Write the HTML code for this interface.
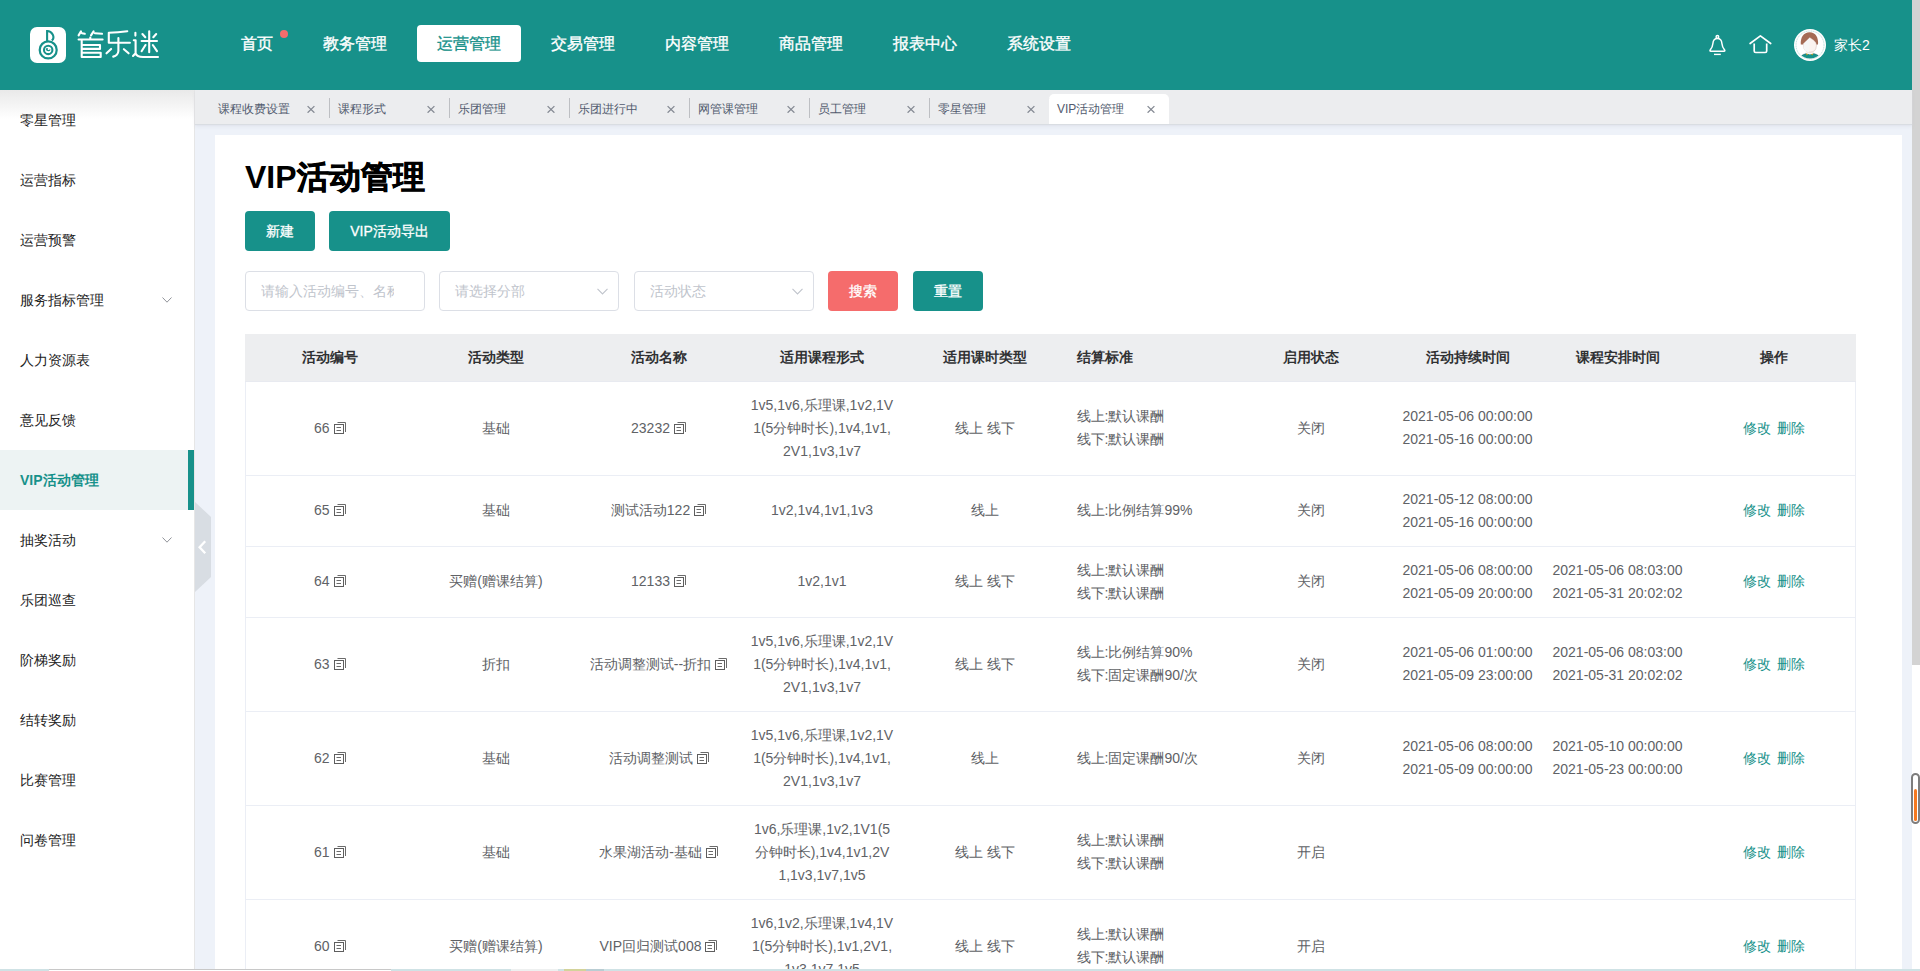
<!DOCTYPE html>
<html><head><meta charset="utf-8">
<style>
*{box-sizing:border-box;margin:0;padding:0}
html,body{width:1920px;height:971px;overflow:hidden;background:#fff}
body{font-family:"Liberation Sans",sans-serif;font-size:14px;color:#333;position:relative}
.abs{position:absolute}
#hdr{left:0;top:0;width:1912px;height:90px;background:#17918a}
#logo{left:30px;top:27px;width:36px;height:36px;background:#fff;border-radius:7px}
#brand{left:78px;top:27px;font-size:27px;color:#fff;line-height:34px;letter-spacing:0px}
.nav{top:25px;height:37px;line-height:37px;font-size:16px;color:#fff;padding:0 20px;border-radius:4px;-webkit-text-stroke:0.35px currentColor}
.nav.on{background:#fff;color:#17918a}
#dot{left:280px;top:30px;width:8px;height:8px;border-radius:50%;background:#f56c6c}
#sb{left:0;top:90px;width:195px;height:881px;background:#fff;border-right:1px solid #e6e6e6}
#sbshadow{left:0;top:90px;width:194px;height:29px;background:linear-gradient(#e9e9e9,#f3f3f3 45%,rgba(255,255,255,0))}
.mi{left:0;width:194px;height:60px;line-height:60px;padding-left:20px;font-size:14px;color:#222}
.mi.on{background:#edf3f3;color:#17918a;font-weight:bold}
.mi.on:after{content:"";position:absolute;right:0;top:0;width:6px;height:60px;background:#17918a}
.chev{position:absolute;left:162px;top:27px;width:10px;height:6px}
#tabs{left:195px;top:90px;width:1717px;height:34px;background:#ecedef;box-shadow:0 1px 1px #d9dde2,0 3px 3px rgba(200,205,215,.25)}
.tab{top:4px;width:120px;height:30px;line-height:30px;font-size:12px;color:#515a6e;padding-left:9px}
.tab .x{position:absolute;left:98px;top:11px;width:8px;height:8px}
.tab .sep{position:absolute;left:120px;top:4px;width:1px;height:20px;background:#bdbfc3}
.tab.on{background:#fff;border-radius:5px 5px 0 0;padding-left:8px}
#page{left:195px;top:125px;width:1717px;height:846px;background:#eef2f9}
#card{left:215px;top:135px;width:1687px;height:836px;background:#fff}
#title{left:245px;top:157px;font-size:32px;font-weight:bold;color:#000;line-height:40px}
.btn{height:40px;line-height:40px;text-align:center;color:#fff;background:#17918a;border-radius:4px;font-size:14px;-webkit-text-stroke:0.3px #fff}
.inp{top:271px;width:180px;height:40px;border:1px solid #dcdfe6;border-radius:4px;line-height:38px;padding-left:15px;color:#c0c4cc;font-size:14px;overflow:hidden;white-space:nowrap;background:#fff}
.inp svg{position:absolute;top:16px;width:11px;height:7px}
#tbl{left:245px;top:334px;width:1610px;border-collapse:collapse;table-layout:fixed;font-size:14px;color:#606266}
#tbl th{background:#edeef0;color:#303133;font-weight:bold;height:47px;padding:2px 0 0;text-align:center;border-bottom:1px solid #e8eaf0}
#tbl td{padding:12px 10px 12px;text-align:center;line-height:23px;border-bottom:1px solid #ebeef5;word-break:break-all}
#tbl tr td:first-child{border-left:1px solid #ebeef5}
#tbl th:first-child{border-left:1px solid #edeef0}
#tbl th:last-child{border-right:1px solid #edeef0}
#tbl tr td:last-child{border-right:1px solid #ebeef5}
#tbl td.l{text-align:left}
.cp{display:inline-block;width:13px;height:13px;vertical-align:-1px;margin-left:4px}
.op{color:#17918a}
</style></head><body>
<div id="hdr" class="abs"></div>
<div id="logo" class="abs"><svg width="36" height="36" viewBox="0 0 36 36" fill="none" stroke="#17918a"><path d="M17.1 3 V14" stroke-width="2.1"/><path d="M17.1 4 C22 4, 25.5 10, 21.9 13.6" stroke-width="2.1"/><circle cx="18.2" cy="22.9" r="8.5" stroke-width="2.2"/><circle cx="18.2" cy="22.9" r="4.2" stroke-width="2.1"/><path d="M16.2 22.3 A2.2 2.2 0 0 0 20.2 22.4" stroke-width="1.1"/><circle cx="17" cy="22" r="1" fill="#17918a" stroke="none"/></svg></div>
<svg id="brand" class="abs" style="left:70px;top:20px" width="100" height="50" viewBox="0 0 100 50" fill="none" stroke="#fff" stroke-width="2.1" stroke-linecap="round" stroke-linejoin="round">
<path d="M8.6 15.4 L11 11.4 M12 13.2 L14.8 13.8 M21 15.4 L23.6 11.4 M24.8 13.2 L32 13.8"/>
<path d="M8.6 19.5 H32.6 M20.3 17.6 V19.5"/>
<path d="M11.7 20.5 V37 H30.7 V32.8 H11.7 M11.7 25 H30 V28.9 H11.7"/>
<path d="M38.8 12.8 Q48 12.6 57.3 11.2 M38.8 12.8 V22.8 H59.9 M48.4 18 V31 Q48 35.6 43.2 36.6 M41.1 28.9 L36.5 33.3 M53.9 29.2 L58.6 33.3"/>
<path d="M65.4 12.8 V15.6 M63.8 20.3 H65.6 V33.3 L63 36 M65.6 33.3 Q67 37 73 37 H88 M79.2 11.2 V32.3 M71.6 21 H87 M72.4 14 L75.3 17.2 M86.2 14 L83.3 17.2 M75.5 25 L71.6 31.2 M82.8 25 L87 31.2"/>
</svg>
<div class="abs nav" style="left:221px">首页</div>
<div id="dot" class="abs"></div>
<div class="abs nav" style="left:303px">教务管理</div>
<div class="abs nav on" style="left:417px">运营管理</div>
<div class="abs nav" style="left:531px">交易管理</div>
<div class="abs nav" style="left:645px">内容管理</div>
<div class="abs nav" style="left:759px">商品管理</div>
<div class="abs nav" style="left:873px">报表中心</div>
<div class="abs nav" style="left:987px">系统设置</div>

<!-- right icons -->
<svg class="abs" style="left:1706px;top:33px" width="24" height="24" viewBox="0 0 24 24" fill="none" stroke="#fff" stroke-width="1.5" stroke-linejoin="round"><circle cx="11.4" cy="3.9" r="1.3"/><path d="M11.4 5.6 C8.3 5.6 7.1 7.8 6.9 10.5 C6.7 13 5.9 15 4.2 17 Q3.5 18.2 4.8 18.2 H18 Q19.3 18.2 18.6 17 C16.9 15 16.1 13 15.9 10.5 C15.7 7.8 14.5 5.6 11.4 5.6 Z"/><path d="M8 21.4 H14.8" stroke-width="1.4"/></svg>
<svg class="abs" style="left:1748px;top:33px" width="25" height="23" viewBox="0 0 25 23" fill="none" stroke="#fff" stroke-width="1.7" stroke-linejoin="round" stroke-linecap="round"><path d="M2.1 10.5 L12.4 2.9 L22.7 10.5"/><path d="M6.2 10.6 V18 Q6.2 19.5 7.7 19.5 H17.2 Q18.7 19.5 18.7 18 V10.6" stroke-linecap="butt"/></svg>
<div class="abs" style="left:1794px;top:29px;width:32px;height:32px;border-radius:50%;background:#fff;overflow:hidden">
<svg width="32" height="32" viewBox="0 0 32 32"><defs><clipPath id="avc"><circle cx="16" cy="16" r="13.6"/></clipPath></defs>
<g clip-path="url(#avc)">
<path d="M5 31 Q6.5 25.6 12 24.6 H20 Q25.5 25.6 27 31 Z" fill="#17918a" stroke="#33506a" stroke-width="0.3"/>
<path d="M11.8 23.4 L14.2 25.8 L12.6 26.2 Z M19.4 23.4 L17 25.8 L18.6 26.2 Z" fill="#d4a017"/>
<path d="M12.4 21.5 V24.6 Q16 26.2 19.2 24.6 V21.5 Z" fill="#fbf1ee"/>
</g>
<path d="M6.8 15.6 C6.2 8.4 9.6 3.2 15.6 3.2 C21.6 3.2 24.6 8.4 24 15.6 Z" fill="#a56b55"/>
<path d="M9.4 14.8 L15.9 8.6 Q19.6 10.8 21.9 13.4 Q22.6 15 22.4 17 Q22 23.2 16 23.2 Q10 23.2 9.6 17 Z" fill="#fbf3f0" stroke="#b58d80" stroke-width="0.3"/>
<path d="M9.4 14.8 L15.9 8.6 L15.2 23.2 Q10 23.2 9.6 17 Z" fill="#f6f6f6"/>
<circle cx="16" cy="16" r="14" fill="none" stroke="#7fbfba" stroke-width="0.5" stroke-dasharray="1.2 0.6"/>
</svg></div>
<div class="abs" style="left:1834px;top:36px;font-size:14px;color:#fff;line-height:18px">家长2</div>

<!-- scrollbar -->
<div class="abs" style="left:1912px;top:0;width:8px;height:971px;background:#fff"></div>
<div class="abs" style="left:1912px;top:0;width:8px;height:665px;background:#d3d3d3"></div>
<div class="abs" style="z-index:6;left:1911px;top:773px;width:9px;height:51px;border:2px solid #7d7d7d;border-radius:5px;background:#fff"></div>
<div class="abs" style="z-index:7;left:1914px;top:789px;width:3px;height:32px;border-radius:1.5px;background:#f47920"></div>
<!-- bottom strip -->
<div class="abs" style="left:0;top:969px;width:1920px;height:2px;background:#cfe2e5;z-index:5"></div>
<div class="abs" style="left:49px;top:969px;width:342px;height:2px;background:#fff;border-top:1px solid #c8c8c8;z-index:5"></div>
<div class="abs" style="left:511px;top:969px;width:47px;height:2px;background:#eef0f0;z-index:5"></div>
<div class="abs" style="left:564px;top:969px;width:22px;height:2px;background:#d3d39a;z-index:5"></div>
<div class="abs" style="left:586px;top:969px;width:18px;height:2px;background:#b9cdd3;z-index:5"></div>
<div id="sb" class="abs"></div>
<div id="sbshadow" class="abs"></div>
<div class="abs mi" style="top:90px">零星管理</div>
<div class="abs mi" style="top:150px">运营指标</div>
<div class="abs mi" style="top:210px">运营预警</div>
<div class="abs mi" style="top:270px">服务指标管理<svg class="chev" viewBox="0 0 10 6"><path d="M0.5 0.5 L5 5.2 L9.5 0.5" fill="none" stroke="#909399" stroke-width="1"/></svg></div>
<div class="abs mi" style="top:330px">人力资源表</div>
<div class="abs mi" style="top:390px">意见反馈</div>
<div class="abs mi on" style="top:450px">VIP活动管理</div>
<div class="abs mi" style="top:510px">抽奖活动<svg class="chev" viewBox="0 0 10 6"><path d="M0.5 0.5 L5 5.2 L9.5 0.5" fill="none" stroke="#909399" stroke-width="1"/></svg></div>
<div class="abs mi" style="top:570px">乐团巡查</div>
<div class="abs mi" style="top:630px">阶梯奖励</div>
<div class="abs mi" style="top:690px">结转奖励</div>
<div class="abs mi" style="top:750px">比赛管理</div>
<div class="abs mi" style="top:810px">问卷管理</div>

<div id="page" class="abs"></div>
<svg class="abs" style="left:195px;top:502px" width="17" height="90" viewBox="0 0 17 90"><path d="M0 0 L16 15 V75 L0 90z" fill="#d8dde3"/><path d="M10.2 39.2 L4.6 45.2 L10.2 51.2" fill="none" stroke="#fff" stroke-width="2.3"/></svg>

<div id="tabs" class="abs">
<div class="abs tab" style="left:14px">课程收费设置<svg class="x" viewBox="0 0 8 8"><path d="M0.6 1.1 L7.4 7.7 M7.4 1.1 L0.6 7.7" stroke="#858a94" stroke-width="1.3"/></svg><div class="sep"></div></div>
<div class="abs tab" style="left:134px">课程形式<svg class="x" viewBox="0 0 8 8"><path d="M0.6 1.1 L7.4 7.7 M7.4 1.1 L0.6 7.7" stroke="#858a94" stroke-width="1.3"/></svg><div class="sep"></div></div>
<div class="abs tab" style="left:254px">乐团管理<svg class="x" viewBox="0 0 8 8"><path d="M0.6 1.1 L7.4 7.7 M7.4 1.1 L0.6 7.7" stroke="#858a94" stroke-width="1.3"/></svg><div class="sep"></div></div>
<div class="abs tab" style="left:374px">乐团进行中<svg class="x" viewBox="0 0 8 8"><path d="M0.6 1.1 L7.4 7.7 M7.4 1.1 L0.6 7.7" stroke="#858a94" stroke-width="1.3"/></svg><div class="sep"></div></div>
<div class="abs tab" style="left:494px">网管课管理<svg class="x" viewBox="0 0 8 8"><path d="M0.6 1.1 L7.4 7.7 M7.4 1.1 L0.6 7.7" stroke="#858a94" stroke-width="1.3"/></svg><div class="sep"></div></div>
<div class="abs tab" style="left:614px">员工管理<svg class="x" viewBox="0 0 8 8"><path d="M0.6 1.1 L7.4 7.7 M7.4 1.1 L0.6 7.7" stroke="#858a94" stroke-width="1.3"/></svg><div class="sep"></div></div>
<div class="abs tab" style="left:734px">零星管理<svg class="x" viewBox="0 0 8 8"><path d="M0.6 1.1 L7.4 7.7 M7.4 1.1 L0.6 7.7" stroke="#858a94" stroke-width="1.3"/></svg><div class="sep"></div></div>
<div class="abs tab on" style="left:854px">VIP活动管理<svg class="x" viewBox="0 0 8 8"><path d="M0.6 1.1 L7.4 7.7 M7.4 1.1 L0.6 7.7" stroke="#858a94" stroke-width="1.3"/></svg></div>
</div>
<div id="card" class="abs"></div>
<div id="title" class="abs">VIP<span style="-webkit-text-stroke:0.7px #000">活动管理</span></div>
<div class="abs btn" style="left:245px;top:211px;width:70px">新建</div>
<div class="abs btn" style="left:329px;top:211px;width:121px">VIP活动导出</div>
<div class="abs inp" style="left:245px"><span style="display:inline-block;width:133px;overflow:hidden;vertical-align:top">请输入活动编号、名称</span></div>
<div class="abs inp" style="left:439px">请选择分部<svg style="left:157px" viewBox="0 0 11 7"><path d="M0.5 0.8 L5.5 6 L10.5 0.8" fill="none" stroke="#c0c4cc" stroke-width="1.1"/></svg></div>
<div class="abs inp" style="left:634px">活动状态<svg style="left:157px" viewBox="0 0 11 7"><path d="M0.5 0.8 L5.5 6 L10.5 0.8" fill="none" stroke="#c0c4cc" stroke-width="1.1"/></svg></div>
<div class="abs btn" style="left:828px;top:271px;width:70px;background:#f56c6c">搜索</div>
<div class="abs btn" style="left:913px;top:271px;width:70px">重置</div>

<table id="tbl" class="abs">
<colgroup><col style="width:169px"><col style="width:163px"><col style="width:163px"><col style="width:163px"><col style="width:163px"><col style="width:163px"><col style="width:163px"><col style="width:150px"><col style="width:150px"><col style="width:163px"></colgroup>
<thead><tr><th>活动编号</th><th>活动类型</th><th>活动名称</th><th>适用课程形式</th><th>适用课时类型</th><th style="text-align:left;padding-left:10px">结算标准</th><th>启用状态</th><th>活动持续时间</th><th>课程安排时间</th><th>操作</th></tr></thead>
<tbody id="tb">
<tr><td>66<svg class="cp" viewBox="0 0 13 13"><path d="M3.5 1.5 H11.5 V11" fill="none" stroke="#6b6b6b" stroke-width="1"/><rect x="0.5" y="3.5" width="9" height="9" fill="#fff" stroke="#5e5e5e" stroke-width="1"/><path d="M2.5 6.5 H7 M2.5 9.5 H7" stroke="#6b6b6b" stroke-width="1"/></svg></td><td>基础</td><td>23232<svg class="cp" viewBox="0 0 13 13"><path d="M3.5 1.5 H11.5 V11" fill="none" stroke="#6b6b6b" stroke-width="1"/><rect x="0.5" y="3.5" width="9" height="9" fill="#fff" stroke="#5e5e5e" stroke-width="1"/><path d="M2.5 6.5 H7 M2.5 9.5 H7" stroke="#6b6b6b" stroke-width="1"/></svg></td><td>1v5,1v6,乐理课,1v2,1V1(5分钟时长),1v4,1v1,2V1,1v3,1v7</td><td>线上 线下</td><td class="l">线上:默认课酬<br>线下:默认课酬</td><td>关闭</td><td>2021-05-06 00:00:00<br>2021-05-16 00:00:00</td><td></td><td class="op">修改<span style="padding-left:6px">删除</span></td></tr>
<tr><td>65<svg class="cp" viewBox="0 0 13 13"><path d="M3.5 1.5 H11.5 V11" fill="none" stroke="#6b6b6b" stroke-width="1"/><rect x="0.5" y="3.5" width="9" height="9" fill="#fff" stroke="#5e5e5e" stroke-width="1"/><path d="M2.5 6.5 H7 M2.5 9.5 H7" stroke="#6b6b6b" stroke-width="1"/></svg></td><td>基础</td><td>测试活动122<svg class="cp" viewBox="0 0 13 13"><path d="M3.5 1.5 H11.5 V11" fill="none" stroke="#6b6b6b" stroke-width="1"/><rect x="0.5" y="3.5" width="9" height="9" fill="#fff" stroke="#5e5e5e" stroke-width="1"/><path d="M2.5 6.5 H7 M2.5 9.5 H7" stroke="#6b6b6b" stroke-width="1"/></svg></td><td>1v2,1v4,1v1,1v3</td><td>线上</td><td class="l">线上:比例结算99%</td><td>关闭</td><td>2021-05-12 08:00:00<br>2021-05-16 00:00:00</td><td></td><td class="op">修改<span style="padding-left:6px">删除</span></td></tr>
<tr><td>64<svg class="cp" viewBox="0 0 13 13"><path d="M3.5 1.5 H11.5 V11" fill="none" stroke="#6b6b6b" stroke-width="1"/><rect x="0.5" y="3.5" width="9" height="9" fill="#fff" stroke="#5e5e5e" stroke-width="1"/><path d="M2.5 6.5 H7 M2.5 9.5 H7" stroke="#6b6b6b" stroke-width="1"/></svg></td><td>买赠(赠课结算)</td><td>12133<svg class="cp" viewBox="0 0 13 13"><path d="M3.5 1.5 H11.5 V11" fill="none" stroke="#6b6b6b" stroke-width="1"/><rect x="0.5" y="3.5" width="9" height="9" fill="#fff" stroke="#5e5e5e" stroke-width="1"/><path d="M2.5 6.5 H7 M2.5 9.5 H7" stroke="#6b6b6b" stroke-width="1"/></svg></td><td>1v2,1v1</td><td>线上 线下</td><td class="l">线上:默认课酬<br>线下:默认课酬</td><td>关闭</td><td>2021-05-06 08:00:00<br>2021-05-09 20:00:00</td><td>2021-05-06 08:03:00<br>2021-05-31 20:02:02</td><td class="op">修改<span style="padding-left:6px">删除</span></td></tr>
<tr><td>63<svg class="cp" viewBox="0 0 13 13"><path d="M3.5 1.5 H11.5 V11" fill="none" stroke="#6b6b6b" stroke-width="1"/><rect x="0.5" y="3.5" width="9" height="9" fill="#fff" stroke="#5e5e5e" stroke-width="1"/><path d="M2.5 6.5 H7 M2.5 9.5 H7" stroke="#6b6b6b" stroke-width="1"/></svg></td><td>折扣</td><td>活动调整测试--折扣<svg class="cp" viewBox="0 0 13 13"><path d="M3.5 1.5 H11.5 V11" fill="none" stroke="#6b6b6b" stroke-width="1"/><rect x="0.5" y="3.5" width="9" height="9" fill="#fff" stroke="#5e5e5e" stroke-width="1"/><path d="M2.5 6.5 H7 M2.5 9.5 H7" stroke="#6b6b6b" stroke-width="1"/></svg></td><td>1v5,1v6,乐理课,1v2,1V1(5分钟时长),1v4,1v1,2V1,1v3,1v7</td><td>线上 线下</td><td class="l">线上:比例结算90%<br>线下:固定课酬90/次</td><td>关闭</td><td>2021-05-06 01:00:00<br>2021-05-09 23:00:00</td><td>2021-05-06 08:03:00<br>2021-05-31 20:02:02</td><td class="op">修改<span style="padding-left:6px">删除</span></td></tr>
<tr><td>62<svg class="cp" viewBox="0 0 13 13"><path d="M3.5 1.5 H11.5 V11" fill="none" stroke="#6b6b6b" stroke-width="1"/><rect x="0.5" y="3.5" width="9" height="9" fill="#fff" stroke="#5e5e5e" stroke-width="1"/><path d="M2.5 6.5 H7 M2.5 9.5 H7" stroke="#6b6b6b" stroke-width="1"/></svg></td><td>基础</td><td>活动调整测试<svg class="cp" viewBox="0 0 13 13"><path d="M3.5 1.5 H11.5 V11" fill="none" stroke="#6b6b6b" stroke-width="1"/><rect x="0.5" y="3.5" width="9" height="9" fill="#fff" stroke="#5e5e5e" stroke-width="1"/><path d="M2.5 6.5 H7 M2.5 9.5 H7" stroke="#6b6b6b" stroke-width="1"/></svg></td><td>1v5,1v6,乐理课,1v2,1V1(5分钟时长),1v4,1v1,2V1,1v3,1v7</td><td>线上</td><td class="l">线上:固定课酬90/次</td><td>关闭</td><td>2021-05-06 08:00:00<br>2021-05-09 00:00:00</td><td>2021-05-10 00:00:00<br>2021-05-23 00:00:00</td><td class="op">修改<span style="padding-left:6px">删除</span></td></tr>
<tr><td>61<svg class="cp" viewBox="0 0 13 13"><path d="M3.5 1.5 H11.5 V11" fill="none" stroke="#6b6b6b" stroke-width="1"/><rect x="0.5" y="3.5" width="9" height="9" fill="#fff" stroke="#5e5e5e" stroke-width="1"/><path d="M2.5 6.5 H7 M2.5 9.5 H7" stroke="#6b6b6b" stroke-width="1"/></svg></td><td>基础</td><td>水果湖活动-基础<svg class="cp" viewBox="0 0 13 13"><path d="M3.5 1.5 H11.5 V11" fill="none" stroke="#6b6b6b" stroke-width="1"/><rect x="0.5" y="3.5" width="9" height="9" fill="#fff" stroke="#5e5e5e" stroke-width="1"/><path d="M2.5 6.5 H7 M2.5 9.5 H7" stroke="#6b6b6b" stroke-width="1"/></svg></td><td>1v6,乐理课,1v2,1V1(5分钟时长),1v4,1v1,2V1,1v3,1v7,1v5</td><td>线上 线下</td><td class="l">线上:默认课酬<br>线下:默认课酬</td><td>开启</td><td></td><td></td><td class="op">修改<span style="padding-left:6px">删除</span></td></tr>
<tr><td>60<svg class="cp" viewBox="0 0 13 13"><path d="M3.5 1.5 H11.5 V11" fill="none" stroke="#6b6b6b" stroke-width="1"/><rect x="0.5" y="3.5" width="9" height="9" fill="#fff" stroke="#5e5e5e" stroke-width="1"/><path d="M2.5 6.5 H7 M2.5 9.5 H7" stroke="#6b6b6b" stroke-width="1"/></svg></td><td>买赠(赠课结算)</td><td>VIP回归测试008<svg class="cp" viewBox="0 0 13 13"><path d="M3.5 1.5 H11.5 V11" fill="none" stroke="#6b6b6b" stroke-width="1"/><rect x="0.5" y="3.5" width="9" height="9" fill="#fff" stroke="#5e5e5e" stroke-width="1"/><path d="M2.5 6.5 H7 M2.5 9.5 H7" stroke="#6b6b6b" stroke-width="1"/></svg></td><td>1v6,1v2,乐理课,1v4,1V1(5分钟时长),1v1,2V1,1v3,1v7,1v5</td><td>线上 线下</td><td class="l">线上:默认课酬<br>线下:默认课酬</td><td>开启</td><td></td><td></td><td class="op">修改<span style="padding-left:6px">删除</span></td></tr>
</tbody>
</table>
</body></html>
